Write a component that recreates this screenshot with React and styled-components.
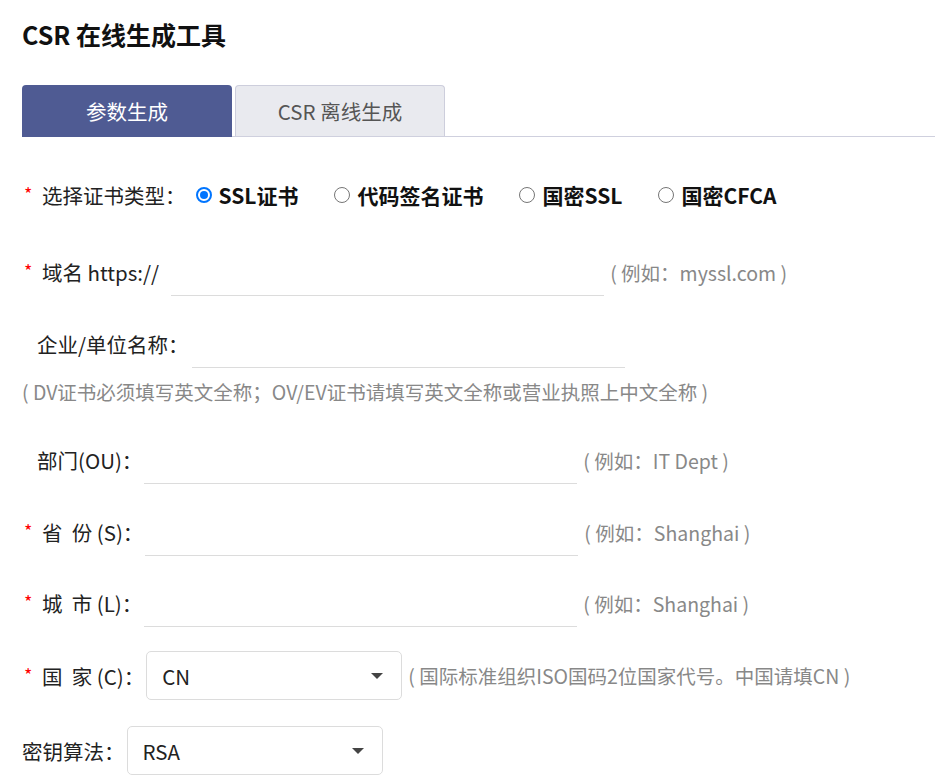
import React from "react";
import styled, { createGlobalStyle } from "styled-components";

const GlobalStyle = createGlobalStyle`
  html, body { margin: 0; padding: 0; background: #fff; }
  body {
    font-family: "Noto Sans CJK SC", "Noto Sans", sans-serif;
    color: #222;
  }
`;

const Page = styled.div`
  padding: 17px 0 0 22px;
  box-sizing: border-box;
`;

const Title = styled.h1`
  margin: 0;
  font-size: 25px;
  line-height: 34px;
  font-weight: 700;
  color: #111;
`;

const TabBar = styled.div`
  margin-top: 34px;
  display: flex;
  gap: 3px;
  border-bottom: 1px solid #cfd0de;
  height: 51px;
`;

const Tab = styled.div`
  width: ${(p) => (p.$active ? "210px" : "208px")};
  height: ${(p) => (p.$active ? "52px" : "50px")};
  box-sizing: content-box;
  display: flex;
  align-items: center;
  justify-content: center;
  font-size: 20.5px;
  border-radius: 4px 4px 0 0;
  background: ${(p) => (p.$active ? "#4f5b93" : "#e9eaef")};
  color: ${(p) => (p.$active ? "#fff" : "#555")};
  border: ${(p) => (p.$active ? "none" : "1px solid #cdcedc")};
  border-bottom: none;
`;

const Form = styled.div`
  padding-top: 34px;
`;

const Row = styled.div`
  display: flex;
  align-items: center;
  height: ${(p) => p.$h || 48}px;
  margin-top: ${(p) => p.$mt || 0}px;
  padding-left: ${(p) => p.$indent || 0}px;
`;

const Label = styled.label`
  font-size: 20.5px;
  color: #222;
  white-space: nowrap;
  display: flex;
  align-items: center;
`;

const Star = styled.span`
  display: inline-block;
  width: 20px;
  padding-left: 2px;
  box-sizing: border-box;
  color: #f00;
  font-size: 18px;
  position: relative;
  top: -2px;
`;

const Field = styled.input`
  width: 433px;
  height: 48px;
  box-sizing: border-box;
  border: none;
  border-bottom: 1px solid #dcdcdc;
  margin-left: ${(p) => p.$ml ?? 10}px;
  font-size: 20px;
  font-family: inherit;
  outline: none;
  background: transparent;
`;

const Hint = styled.span`
  font-size: 19.5px;
  color: #888;
  white-space: nowrap;
  margin-left: ${(p) => p.$ml ?? 6}px;
`;

const HintLine = styled.div`
  font-size: 19.5px;
  color: #888;
  line-height: 24px;
  margin-top: 12px;
`;

const Options = styled.div`
  display: flex;
  align-items: center;
  gap: 36px;
  margin-left: 10px;
`;

const Option = styled.label`
  display: flex;
  align-items: center;
  gap: 7px;
  font-size: 21px;
  font-weight: 700;
  color: #111;
`;

const Radio = styled.span`
  width: 16px;
  height: 16px;
  box-sizing: border-box;
  border-radius: 50%;
  border: ${(p) => (p.$checked ? "2px solid #0075ff" : "1px solid #767676")};
  display: flex;
  align-items: center;
  justify-content: center;
  &::after {
    content: "";
    width: 8px;
    height: 8px;
    border-radius: 50%;
    background: ${(p) => (p.$checked ? "#0075ff" : "transparent")};
  }
`;

const Select = styled.div`
  width: 256px;
  height: 49px;
  box-sizing: border-box;
  border: 1px solid #dcdcdc;
  border-radius: 5px;
  margin-left: ${(p) => p.$ml ?? 10}px;
  display: flex;
  align-items: center;
  justify-content: space-between;
  padding: 0 18px 0 15px;
  font-size: 20.5px;
  color: #222;
`;

const Caret = styled.span`
  width: 0;
  height: 0;
  border-left: 6px solid transparent;
  border-right: 6px solid transparent;
  border-top: 6px solid #444;
`;

export default function App() {
  return (
    <>
      <GlobalStyle />
      <Page>
        <Title>CSR 在线生成工具</Title>
        <TabBar>
          <Tab $active>参数生成</Tab>
          <Tab>CSR 离线生成</Tab>
        </TabBar>
        <Form>
          <Row>
            <Label>
              <Star>*</Star>选择证书类型：
            </Label>
            <Options>
              <Option>
                <Radio $checked />
                SSL证书
              </Option>
              <Option>
                <Radio />
                代码签名证书
              </Option>
              <Option>
                <Radio />
                国密SSL
              </Option>
              <Option>
                <Radio />
                国密CFCA
              </Option>
            </Options>
          </Row>
          <Row $mt={29}>
            <Label>
              <Star>*</Star>域名 https://
            </Label>
            <Field $ml={12} />
            <Hint>( 例如：myssl.com )</Hint>
          </Row>
          <Row $mt={24} $indent={15}>
            <Label>企业/单位名称：</Label>
            <Field $ml={3} />
          </Row>
          <HintLine>( DV证书必须填写英文全称；OV/EV证书请填写英文全称或营业执照上中文全称 )</HintLine>
          <Row $mt={32} $indent={15}>
            <Label>部门(OU)：</Label>
            <Field $ml={2} />
            <Hint>( 例如：IT Dept )</Hint>
          </Row>
          <Row $mt={24}>
            <Label>
              <Star>*</Star>省&nbsp;&nbsp;份 (S)：
            </Label>
            <Field $ml={2} />
            <Hint>( 例如：Shanghai )</Hint>
          </Row>
          <Row $mt={23}>
            <Label>
              <Star>*</Star>城&nbsp;&nbsp;市 (L)：
            </Label>
            <Field $ml={2} />
            <Hint>( 例如：Shanghai )</Hint>
          </Row>
          <Row $mt={24} $h={49}>
            <Label>
              <Star>*</Star>国&nbsp;&nbsp;家 (C)：
            </Label>
            <Select $ml={2}>
              CN
              <Caret />
            </Select>
            <Hint>( 国际标准组织ISO国码2位国家代号。中国请填CN )</Hint>
          </Row>
          <Row $mt={26} $h={49}>
            <Label>密钥算法：</Label>
            <Select $ml={2}>
              RSA
              <Caret />
            </Select>
          </Row>
        </Form>
      </Page>
    </>
  );
}
